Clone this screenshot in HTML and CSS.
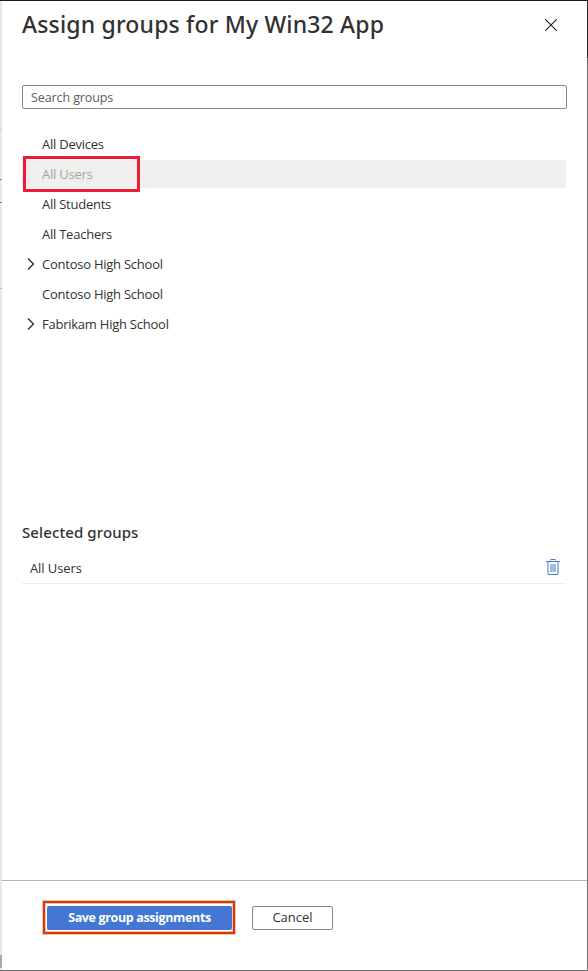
FILE: index.html
```html
<!DOCTYPE html>
<html lang="en">
<head>
<meta charset="utf-8">
<title>Assign groups</title>
<link rel="stylesheet" href="styles.css">
</head>
<body>
<div class="backdrop"></div>
<section class="panel">
  <header class="panel-header">
    <h1><span>Assign groups for My Win32 App</span></h1>
    <svg class="close" viewBox="0 0 12 12" width="12" height="12"><path d="M0 0L12 12M12 0L0 12" stroke="#222" stroke-width="1.1"/></svg>
  </header>
  <main class="content">
    <input class="search" type="text" placeholder="Search groups" aria-label="Search groups">
    <ul class="groups">
      <li><span>All Devices</span></li>
      <li class="disabled"><span>All Users</span><div class="mark"></div></li>
      <li><span>All Students</span></li>
      <li><span>All Teachers</span></li>
      <li class="parent"><svg class="chevron" viewBox="0 0 8 12" width="8" height="12"><path d="M1 .5L6.5 6L1 11.5" fill="none" stroke="#222" stroke-width="1.2"/></svg><span>Contoso High School</span></li>
      <li><span>Contoso High School</span></li>
      <li class="parent"><svg class="chevron" viewBox="0 0 8 12" width="8" height="12"><path d="M1 .5L6.5 6L1 11.5" fill="none" stroke="#222" stroke-width="1.2"/></svg><span>Fabrikam High School</span></li>
    </ul>
    <h2><span>Selected groups</span></h2>
    <div class="selected"><span>All Users</span>
      <svg class="trash" viewBox="0 0 14 16" width="14" height="16" shape-rendering="crispEdges"><path d="M1 3h2v12H1zM11 3h2v12h-2z" fill="#a1bae9"/><path d="M4 5h6v8H4z" fill="#a1bae9"/><path d="M0 2h14v1H0zM5 0h4v1H5zM2 15h10v1H2z" fill="#4576d2"/><path d="M4 0h1v2H4zM9 0h1v2H9z" fill="#a1bae9"/></svg>
    </div>
  </main>
  <footer class="actions">
    <div class="save-ring"><button class="save"><span>Save group assignments</span></button></div>
    <button class="cancel"><span>Cancel</span></button>
  </footer>
</section>
<div class="side"></div>
</body>
</html>
```
FILE: styles.css
```css
* { box-sizing: border-box; }
body {
  margin: 0;
  height: 971px;
  display: grid;
  grid-template-columns: 2px 1fr 1px;
  border-top: 1px solid #1b1a1f;
  border-bottom: 1px solid #707070;
  background: #fff;
  color: #323130;
  font: 13px/20px "Open Sans", "Noto Sans", sans-serif;
  overflow: hidden;
}
.backdrop {
  background:
    linear-gradient(#c0c0c0, #c0c0c0) 0 128px / 2px 1px no-repeat,
    linear-gradient(#777, #777) 0 178px / 2px 1px no-repeat,
    linear-gradient(#777, #777) 0 201px / 2px 1px no-repeat,
    linear-gradient(#d5d5d5, #d5d5d5) 0 252px / 2px 1px no-repeat,
    linear-gradient(#bbb, #bbb) 0 287px / 2px 1px no-repeat,
    linear-gradient(#aaa, #aaa) 0 954px / 2px 13px no-repeat,
    #e8e8e8;
}
.side { background: linear-gradient(#29292d 57px, #707070 57px); }
.panel { display: flex; flex-direction: column; min-width: 0; }
.panel-header {
  display: flex;
  justify-content: space-between;
  padding: 7px 30px 0 20px;
  height: 84px;
}
h1 {
  margin: 0;
  font-family: "Noto Sans", sans-serif;
  font-size: 23px;
  line-height: 32px;
  font-weight: 500;
  letter-spacing: .17px;
  white-space: nowrap;
}
.close { margin-top: 11px; }
.content { flex: 1; padding: 0 20px; }
.search {
  display: block;
  width: 545px;
  height: 24px;
  padding: 0 8px;
  border: 1px solid #8a8886;
  border-radius: 2px;
  font: inherit;
  font-size: 12.5px;
  letter-spacing: -.1px;
}
.search::placeholder { color: #605e5c; opacity: 1; }
.groups {
  list-style: none;
  margin: 21px 0 0;
  padding: 0;
  width: 544px;
  display: grid;
  grid-auto-rows: 28px;
  row-gap: 2px;
  letter-spacing: -.24px;
}
.groups li {
  position: relative;
  display: flex;
  align-items: center;
  padding-left: 20px;
}
.groups .parent { padding-left: 5px; }
.chevron { margin-right: 7px; }
.groups .disabled { background: #f0efed; color: #a6a4a2; }
.mark {
  position: absolute;
  left: 1px;
  top: -4px;
  width: 117px;
  height: 36px;
  border: 3px solid #ee1b37;
}
h2 {
  margin: 182px 0 0;
  font-family: "Noto Sans", sans-serif;
  font-size: 15px;
  line-height: 24px;
  font-weight: 500;
  letter-spacing: .1px;
}
.selected {
  display: flex;
  align-items: center;
  justify-content: space-between;
  width: 544px;
  height: 32px;
  margin-top: 8px;
  padding: 0 6px 0 8px;
  border-bottom: 1px solid #edebe9;
  letter-spacing: -.1px;
}
.trash { margin-bottom: 2px; }
.actions {
  display: flex;
  align-items: flex-start;
  gap: 17px;
  height: 90px;
  padding: 20px 41px;
  border-top: 1px solid #b5b5b5;
}
.save-ring {
  padding: 3px 1px 2px 2px;
  border: 2px solid #d83b01;
  box-shadow: 0 0 0 1px #edc4b9, inset 0 0 0 1px #edc4b9;
}
button {
  height: 24px;
  padding: 0;
  font: 13px/20px "Open Sans", "Noto Sans", sans-serif;
  border-radius: 2px;
  white-space: nowrap;
}
.save {
  display: block;
  width: 185px;
  border: 0;
  background: #4477d3;
  color: #fff;
  font-size: 12.5px;
  font-weight: 700;
  letter-spacing: -.36px;
}
.cancel {
  width: 81px;
  margin-top: 5px;
  padding-bottom: 2px;
  border: 1px solid #8a8886;
  background: #fff;
  color: #323130;
}
```
